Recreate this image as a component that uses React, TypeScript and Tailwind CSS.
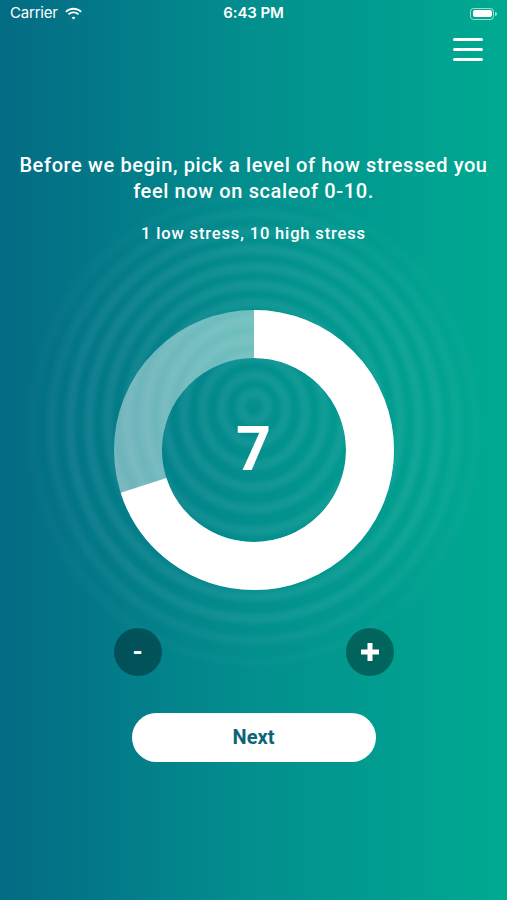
import React from 'react';

const RING_R = 116;
const RING_C = 2 * Math.PI * RING_R;

function StatusBar() {
  return (
    <div className="flex h-[27px] items-center justify-between px-[10px] text-[15px] text-white font-['Inter',sans-serif]">
      <div className="flex items-center gap-[6px] w-[120px]">
        <span className="tracking-[-0.2px]">Carrier</span>
        <svg width="19" height="14" viewBox="0 0 17 12" fill="white">
          <path d="M8.5 2.2c2.4 0 4.6.9 6.2 2.5l1.2-1.2C14 1.6 11.4.5 8.5.5S3 1.6 1.1 3.5l1.2 1.2C3.9 3.1 6.1 2.2 8.5 2.2z" />
          <path d="M8.5 5.4c1.5 0 2.9.6 3.9 1.6l1.2-1.2C12.3 4.5 10.5 3.7 8.5 3.7S4.7 4.5 3.4 5.8L4.6 7c1-1 2.4-1.6 3.9-1.6z" />
          <path d="M8.5 8.5c.7 0 1.3.3 1.7.7L8.5 11 6.8 9.2c.4-.4 1-.7 1.7-.7z" />
        </svg>
      </div>
      <span className="font-semibold tracking-[-0.1px]">6:43 PM</span>
      <div className="flex w-[120px] justify-end">
        <div className="flex items-center">
          <div className="h-[12px] w-[24px] rounded-[3.5px] border border-white/60 p-[1.5px]">
            <div className="h-full w-full rounded-[2px] bg-white" />
          </div>
          <div className="ml-[1px] h-[4px] w-[1.5px] rounded-r-sm bg-white/60" />
        </div>
      </div>
    </div>
  );
}

// soft fingerprint-like rings behind the donut
function Ripples() {
  const rings = [];
  for (let r = 234; r > 12; r -= 20) {
    rings.push(
      <ellipse
        key={r}
        cx={0}
        cy={(234 - r) * -0.1}
        rx={r * 0.95}
        ry={r}
        fill="none"
        stroke="white"
        strokeOpacity={0.065}
        strokeWidth={10}
      />
    );
  }
  return (
    <svg
      className="pointer-events-none absolute left-1/2 top-1/2 -translate-x-1/2 -translate-y-1/2"
      width="500"
      height="520"
      viewBox="-250 -260 500 520"
    >
      <defs>
        <radialGradient id="fade" cx="50%" cy="50%" r="50%">
          <stop offset="0.72" stopColor="white" stopOpacity="1" />
          <stop offset="0.97" stopColor="white" stopOpacity="0" />
        </radialGradient>
        <mask id="m">
          <rect x="-250" y="-260" width="500" height="520" fill="url(#fade)" />
        </mask>
        <filter id="soft">
          <feGaussianBlur stdDeviation="2" />
        </filter>
      </defs>
      <g mask="url(#m)" filter="url(#soft)">{rings}</g>
    </svg>
  );
}

function Donut({ value }: { value: number }) {
  const filled = (value / 10) * RING_C;
  return (
    <div className="relative h-[280px] w-[280px]">
      <svg width="280" height="280" viewBox="0 0 280 280" className="absolute inset-0">
        <circle cx="140" cy="140" r={RING_R} fill="none" stroke="white" strokeOpacity="0.43" strokeWidth="48" />
        <circle
          cx="140"
          cy="140"
          r={RING_R}
          fill="none"
          stroke="white"
          strokeWidth="48"
          strokeDasharray={`${filled} ${RING_C}`}
          transform="rotate(-90 140 140)"
        />
      </svg>
      <div className="absolute inset-0 flex items-center justify-center">
        <span className="text-[61px] font-bold leading-none text-white">{value}</span>
      </div>
    </div>
  );
}

export default function App() {
  return (
    <div className="h-[900px] w-full overflow-hidden bg-gradient-to-r from-[#046b84] via-[#038f8e] to-[#00aa91] font-['Roboto',sans-serif]">
      <StatusBar />

      <div className="flex justify-end px-[24px] pt-[11px]">
        <div className="flex w-[30px] flex-col gap-[7.5px]">
          <div className="h-[2.5px] rounded-full bg-white" />
          <div className="h-[2.5px] rounded-full bg-white" />
          <div className="h-[2.5px] rounded-full bg-white" />
        </div>
      </div>

      <div className="mt-[91px] px-[10px] text-center text-[20px] font-medium leading-[26px] tracking-[0.62px] text-white">
        Before we begin, pick a level of how stressed you feel now on scaleof 0-10.
      </div>

      <div className="relative mt-[20px] flex flex-col items-center">
        <div className="absolute left-1/2 top-[205px] h-0 w-0">
          <Ripples />
        </div>

        <p className="relative text-[16.5px] font-medium leading-[20px] tracking-[0.85px] text-white">
          1 low stress, 10 high stress
        </p>

        <div className="relative mt-[66px]">
          <Donut value={7} />
        </div>

        <div className="relative mt-[38px] flex w-[280px] justify-between">
          <button className="flex h-[48px] w-[48px] items-center justify-center rounded-full bg-black/35 text-[26px] font-bold leading-none text-white">
            -
          </button>
          <button className="flex h-[48px] w-[48px] items-center justify-center rounded-full bg-black/35 text-white">
            <svg width="20" height="20" viewBox="0 0 20 20" fill="white">
              <rect x="7.5" y="1" width="5" height="18" rx="0.5" />
              <rect x="1" y="7.5" width="18" height="5" rx="0.5" />
            </svg>
          </button>
        </div>

        <button className="relative mt-[37px] h-[49px] w-[244px] rounded-full bg-white text-[20px] font-bold text-[#0b6577]">
          Next
        </button>
      </div>
    </div>
  );
}
